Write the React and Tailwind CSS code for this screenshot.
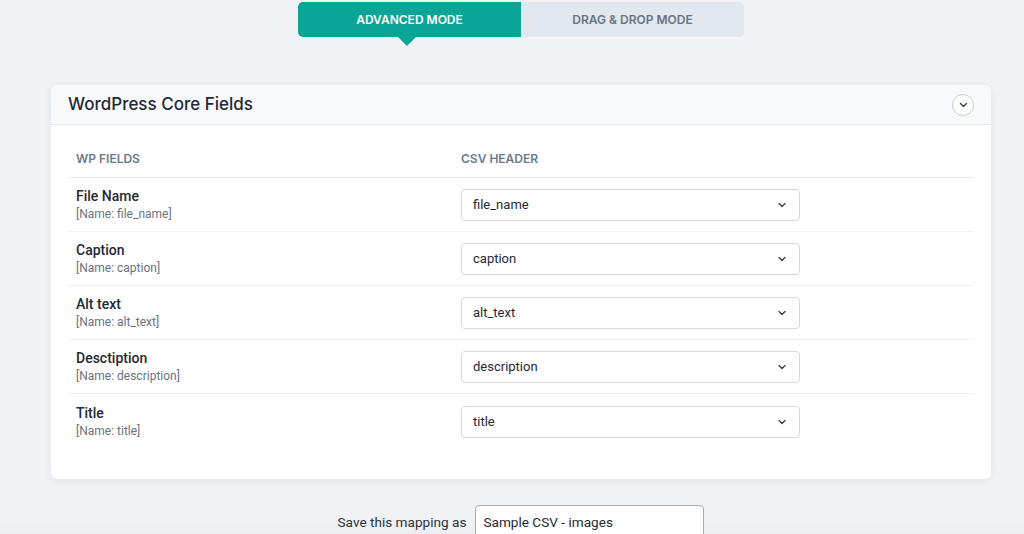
import React from "react";

const rows = [
  { label: "File Name", name: "file_name", value: "file_name" },
  { label: "Caption", name: "caption", value: "caption" },
  { label: "Alt text", name: "alt_text", value: "alt_text" },
  { label: "Desctiption", name: "description", value: "description" },
  { label: "Title", name: "title", value: "title" },
];

function Chevron({ className }) {
  return (
    <svg className={className} viewBox="0 0 12 8" fill="none" stroke="currentColor" strokeWidth="1.8" strokeLinecap="round" strokeLinejoin="round">
      <path d="M2 2l4 4 4-4" />
    </svg>
  );
}

export default function App() {
  return (
    <div className="h-[534px] w-[1024px] overflow-hidden bg-[#f1f3f7] font-['Inter',sans-serif]">
      <div className="flex justify-center pl-[51px] pr-[33px] pt-[2px]">
        <div className="flex w-[446px]">
          <div className="relative flex h-[35px] w-[223px] items-center justify-center rounded-l-[5px] bg-[#0aa596] text-[12px] font-semibold text-white">
            ADVANCED MODE
            <div className="absolute left-[100px] top-[35px] h-0 w-0 border-x-[9px] border-t-[9px] border-x-transparent border-t-[#0aa596]" />
          </div>
          <div className="flex h-[35px] w-[223px] items-center justify-center rounded-r-[5px] bg-[#e3e8ef] text-[12px] font-semibold text-[#6b7280]">
            DRAG &amp; DROP MODE
          </div>
        </div>
      </div>

      <div className="pl-[51px] pr-[33px] pt-[48px]">
        <div className="overflow-hidden rounded-[6px] bg-white shadow-[0_2px_10px_rgba(30,40,60,0.08)]">
          <div className="flex h-[40px] items-center justify-between border-b border-[#e5e7eb] bg-[#f9fafb] pl-[17px] pr-[17px]">
            <div className="text-[17px] font-medium text-[#1f2937]">WordPress Core Fields</div>
            <div className="flex h-[22px] w-[22px] items-center justify-center rounded-full border border-[#c8ccd2] bg-white text-[#374151]">
              <Chevron className="h-[6px] w-[9px]" />
            </div>
          </div>
          <div className="px-[17px] pb-[31px] pt-[25px]">
            <div className="flex h-[28px] items-start border-b border-[#e5e7eb] text-[12px] font-semibold text-[#6b7a8f]">
              <div className="w-[385px] pl-[8px]">WP FIELDS</div>
              <div className="pl-[8px]">CSV HEADER</div>
            </div>
            {rows.map((r, i) => (
              <div key={r.name} className={`flex h-[54px] items-center font-['Roboto',sans-serif] ${i < rows.length - 1 ? "border-b border-[#eef0f3]" : ""}`}>
                <div className="w-[385px] pl-[8px] pt-[1px]">
                  <div className="text-[14px] font-medium leading-[18px] text-[#1f2937]">{r.label}</div>
                  <div className="text-[12px] leading-[18px] text-[#6b7280]">[Name: {r.name}]</div>
                </div>
                <div className="pl-[8px] pt-[1px]">
                  <div className="flex h-[32px] w-[339px] items-center justify-between rounded-[4px] border border-[#d6d9de] bg-white pl-[11px] pr-[12px]">
                    <span className="text-[13px] text-[#1f2937]">{r.value}</span>
                    <Chevron className="h-[6px] w-[10px] text-[#374151]" />
                  </div>
                </div>
              </div>
            ))}
          </div>
        </div>
      </div>

      <div className="mt-[26px] flex h-[40px] items-start justify-center gap-[9px] bg-gradient-to-b from-[#f1f3f7] via-[#eff1f5] to-[#e6e8ec] pl-[51px] pr-[33px] font-['Roboto',sans-serif]">
        <div className="pt-[7px] text-[13.6px] text-[#2d3138]">Save this mapping as</div>
        <div className="h-[40px] w-[229px] rounded-t-[4px] border border-[#a8adb5] bg-white pl-[7px] pt-[6px] text-[13.6px] text-[#1f2937]">
          Sample CSV - images
        </div>
      </div>
    </div>
  );
}
